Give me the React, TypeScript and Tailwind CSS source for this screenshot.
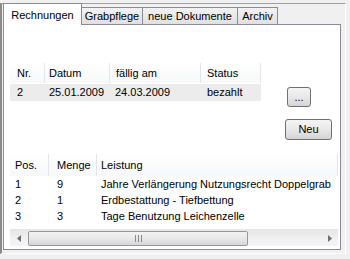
import React from 'react';

const font = { fontFamily: '"Liberation Sans", Arial, sans-serif' };

const Tab: React.FC<{ label: string; active?: boolean; w: string }> = ({ label, active, w }) =>
  active ? (
    <div className={`${w} h-[22px] -mb-px relative z-10 border border-b-0 border-[#898c95] bg-white flex items-start justify-center pt-[3px] text-[11px] text-black`}>
      {label}
    </div>
  ) : (
    <div className={`${w} h-[17px] -ml-px border border-b-0 border-[#898c95] bg-gradient-to-b from-[#f2f2f2] to-[#e0e0e0] flex items-center justify-center text-[11px] text-black`}>
      {label}
    </div>
  );

const HeadCell: React.FC<{ label: string; w: string; pl: string }> = ({ label, w, pl }) => (
  <div className={`${w} ${pl} h-full flex items-center border-r border-[#e3e5e8] shrink-0`}>{label}</div>
);

const Btn: React.FC<{ label: string; cls: string }> = ({ label, cls }) => (
  <div className={`${cls} rounded-[3px] border border-[#707070] bg-gradient-to-b from-[#f4f4f4] via-[#e8e8e8] to-[#d4d4d4] flex items-center justify-center text-[11px] text-black`}>
    {label}
  </div>
);

export default function App() {
  const items = [
    ['1', '9', 'Jahre Verlängerung Nutzungsrecht Doppelgrab'],
    ['2', '1', 'Erdbestattung - Tiefbettung'],
    ['3', '3', 'Tage Benutzung Leichenzelle'],
  ];
  return (
    <div className="w-[350px] h-[259px] bg-[#f0f0f0] overflow-hidden" style={font}>
      <div className="mt-[3px] w-[346px] h-[251px] border-l-2 border-l-[#8a8a8a] border-t border-t-[#a0a0a0] border-r border-r-white border-b border-b-white">
        {/* tab strip */}
        <div className="flex items-end h-[21px] -mt-px ml-px">
          <Tab label="Rechnungen" active w="w-[79px]" />
          <Tab label="Grabpflege" w="w-[62px]" />
          <Tab label="neue Dokumente" w="w-[96px]" />
          <Tab label="Archiv" w="w-[41px]" />
        </div>
        {/* panel */}
        <div className="ml-px w-[338px] h-[226px] border border-[#898c95] bg-white text-[11px] text-black flex flex-col">
          <div className="flex mt-[38px] ml-[6px]">
            <div className="w-[251px] flex flex-col">
              <div className="h-[20px] flex bg-gradient-to-b from-white to-[#f7f8f9]">
                <HeadCell label="Nr." w="w-[35px]" pl="pl-[7px]" />
                <HeadCell label="Datum" w="w-[65px]" pl="pl-[4px]" />
                <HeadCell label="fällig am" w="w-[91px]" pl="pl-[6px]" />
                <HeadCell label="Status" w="w-[60px]" pl="pl-[6px]" />
              </div>
              <div className="h-[17px] mt-[1px] flex items-center bg-[#ececec]">
                <div className="w-[35px] pl-[7px]">2</div>
                <div className="w-[65px] pl-[4px]">25.01.2009</div>
                <div className="w-[91px] pl-[5px]">24.03.2009</div>
                <div className="w-[60px] pl-[6px]">bezahlt</div>
              </div>
            </div>
            <div className="flex flex-col items-end ml-[24px]">
              <Btn label="..." cls="w-[24px] h-[20px] mt-[24px] mr-[21px]" />
              <Btn label="Neu" cls="w-[47px] h-[21px] mt-[12px]" />
            </div>
          </div>
          <div className="mt-[14px] ml-[6px] w-[328px] flex flex-col">
            <div className="h-[22px] flex bg-gradient-to-b from-white to-[#f7f8f9]">
              <HeadCell label="Pos." w="w-[39px]" pl="pl-[5px]" />
              <HeadCell label="Menge" w="w-[48px]" pl="pl-[8px]" />
              <div className="flex-1 h-full flex items-center pl-[4px] border-r border-[#e3e5e8]">Leistung</div>
            </div>
            {items.map(([p, m, l]) => (
              <div key={p} className="h-[16px] flex items-center">
                <div className="w-[39px] pl-[5px]">{p}</div>
                <div className="w-[48px] pl-[8px]">{m}</div>
                <div className="pl-[4px] whitespace-nowrap">{l}</div>
              </div>
            ))}
            {/* horizontal scrollbar */}
            <div className="mt-[5px] h-[17px] flex items-center bg-gradient-to-b from-[#e6e6e6] via-[#f0f0f0] to-[#f4f4f4] border-t border-[#e6e6e6]">
              <div className="w-[17px] h-full flex items-center justify-center">
                <svg width="4" height="7" viewBox="0 0 4 7"><path d="M4 0 L0 3.5 L4 7 Z" fill="#6d6d6d" /></svg>
              </div>
              <div className="w-[220px] h-[15px] ml-px rounded-[2px] border border-[#979797] bg-gradient-to-b from-[#f3f3f3] via-[#e8e8e8] to-[#d6d6d6] flex items-center justify-center">
                <svg width="7" height="7" viewBox="0 0 7 7">
                  <path d="M0.5 0 V7 M3.5 0 V7 M6.5 0 V7" stroke="#8a8a8a" strokeWidth="1" />
                </svg>
              </div>
              <div className="flex-1" />
              <div className="w-[17px] h-full flex items-center justify-center">
                <svg width="4" height="7" viewBox="0 0 4 7"><path d="M0 0 L4 3.5 L0 7 Z" fill="#6d6d6d" /></svg>
              </div>
            </div>
          </div>
        </div>
      </div>
    </div>
  );
}
